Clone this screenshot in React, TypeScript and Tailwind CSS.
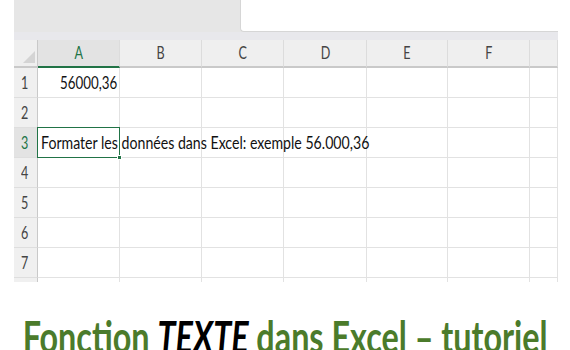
import React from 'react';

const cols = ['A', 'B', 'C', 'D', 'E', 'F', ''];
const rows = [1, 2, 3, 4, 5, 6, 7];

// condensed look: Lato squeezed horizontally, like the screenshot
const Squeeze: React.FC<{ children: React.ReactNode; className?: string }> = ({
  children,
  className = 'scale-x-[0.74] origin-left',
}) => <span className={`inline-block whitespace-nowrap ${className}`}>{children}</span>;

const App: React.FC = () => {
  return (
    <div className="w-[570px] h-[350px] bg-white overflow-hidden font-[Lato,sans-serif]">
      <div className="ml-[14px] w-[544px]">
        {/* Ribbon strip with formula box */}
        <div className="h-[40px] bg-[#e6e6e6] flex flex-col">
          <div className="h-[32px] flex">
            <div className="w-[226px]" />
            <div className="flex-1 bg-white rounded-bl-[4px] border-l border-b border-[#d6d6d6]" />
          </div>
          <div className="flex-1 bg-[#e8e8ec]" />
        </div>

        {/* Sheet */}
        <div className="grid grid-cols-[24px_82px_82px_82px_83px_81px_82px_28px]">
          {/* header row */}
          <div className="h-[28px] bg-[#efefef] border-r border-b-2 border-[#c9c9c9] relative">
            <svg className="absolute right-[2px] bottom-[3px]" width="12" height="12" viewBox="0 0 12 12">
              <polygon points="12,0 12,12 0,12" fill="#d4d4d4" />
            </svg>
          </div>
          {cols.map((c, i) => (
            <div
              key={i}
              className={`h-[28px] flex items-center justify-center border-r border-[#dcdcdc] text-[17px] ${
                c === 'A'
                  ? 'bg-[#e3e3e3] border-b-2 border-b-[#217346] text-[#217346]'
                  : 'bg-[#efefef] border-b-2 border-b-[#c9c9c9] text-[#444]'
              }`}
            >
              <Squeeze className="scale-x-[0.74] origin-center">{c}</Squeeze>
            </div>
          ))}

          {rows.map((r) => (
            <React.Fragment key={r}>
              <div
                className={`h-[30px] flex items-center pl-[7px] border-r border-r-[#c9c9c9] border-b border-b-[#dedede] text-[17px] ${
                  r === 3 ? 'bg-[#e3e3e3] text-[#217346]' : 'bg-[#f0f0f0] text-[#444]'
                }`}
              >
                <Squeeze>{r}</Squeeze>
              </div>
              {cols.map((c, i) => (
                <div key={c + i} className="h-[30px] border-r border-b border-[#e2e2e2] relative">
                  {r === 1 && i === 0 && (
                    <div className="absolute inset-0 flex items-center justify-end pr-[2px] text-[18px] text-[#111]">
                      <Squeeze className="scale-x-[0.74] origin-right">56000,36</Squeeze>
                    </div>
                  )}
                  {r === 3 && i === 0 && (
                    <>
                      <div className="absolute left-[3px] top-0 h-full flex items-center text-[18px] text-[#111] z-10">
                        <Squeeze className="scale-x-[0.785] origin-left">
                          Formater les données dans Excel: exemple 56.000,36
                        </Squeeze>
                      </div>
                      <div className="absolute -left-px -top-px right-[-1px] bottom-[-1px] border-[1.5px] border-[#217346] z-20" />
                      <div className="absolute right-[-3px] bottom-[-3px] w-[5px] h-[5px] bg-[#217346] border border-white z-30" />
                    </>
                  )}
                </div>
              ))}
            </React.Fragment>
          ))}

          {/* partial row at the bottom edge */}
          <div className="h-[4px] bg-[#f0f0f0] border-r border-[#c9c9c9]" />
          {cols.map((c, i) => (
            <div key={'p' + i} className="h-[4px] border-r border-[#e2e2e2]" />
          ))}
        </div>
      </div>

      {/* Title, cut by the bottom edge as in the screenshot */}
      <div className="mt-[32px] flex justify-center">
        <h1 className="text-[44px] leading-none font-bold text-[#4b7b2b]">
          <Squeeze className="scale-x-[0.735] origin-center">
            Fonction <em className="text-black">TEXTE</em> dans Excel – tutoriel
          </Squeeze>
        </h1>
      </div>
    </div>
  );
};

export default App;
